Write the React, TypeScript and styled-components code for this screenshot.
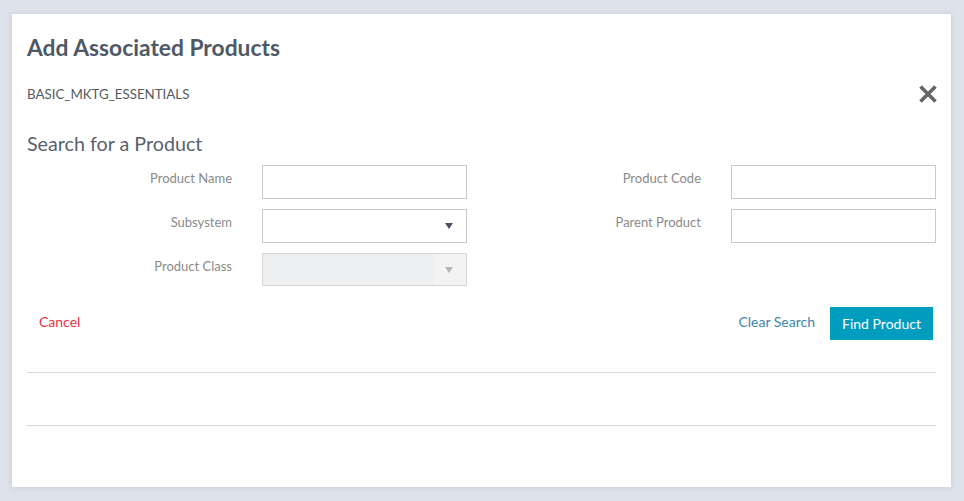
import React from 'react'
import styled, { createGlobalStyle } from 'styled-components'

const GlobalStyle = createGlobalStyle`
  html, body {
    margin: 0;
    padding: 0;
    background: #dee3eb;
    font-family: Lato, "Open Sans", sans-serif;
  }
  * {
    box-sizing: border-box;
  }
`

const Page = styled.div`
  padding: 14px 13px 14px 12px;
`

const Card = styled.div`
  width: 939px;
  height: 473px;
  background: #fff;
  padding: 20px 15px 0 15px;
  box-shadow: 0 0 6px rgba(120, 135, 160, 0.25);
`

const Title = styled.h1`
  margin: 0;
  font-size: 22.8px;
  line-height: 26px;
  font-weight: 700;
  color: #4f5966;
`

const SubRow = styled.div`
  display: flex;
  align-items: center;
  justify-content: space-between;
  height: 20px;
  margin-top: 24px;
`

const Code = styled.span`
  font-size: 13.3px;
  color: #555a60;
`

const CloseButton = styled.button`
  border: none;
  background: none;
  padding: 0;
  margin-right: -2px;
  width: 20px;
  height: 20px;
  cursor: pointer;
  display: flex;
`

const SectionTitle = styled.h2`
  margin: 28px 0 0;
  font-size: 19.7px;
  line-height: 24px;
  font-weight: 400;
  color: #58616c;
`

const Form = styled.div`
  display: grid;
  grid-template-columns: 205px 205px 204px 205px;
  grid-auto-rows: 34px;
  column-gap: 30px;
  row-gap: 10px;
  margin-top: 9px;
`

const Label = styled.label`
  text-align: right;
  font-size: 13px;
  line-height: 18px;
  padding-top: 4px;
  color: #8a8a8a;
`

const Input = styled.input`
  width: 100%;
  height: 100%;
  border: 1px solid #c9c9c9;
  background: #fff;
  font: inherit;
  padding: 0 8px;
  outline: none;
`

const SelectBox = styled.div<{ $disabled?: boolean }>`
  height: ${p => (p.$disabled ? '33px' : '100%')};
  border: 1px solid ${p => (p.$disabled ? '#d5d5d5' : '#c9c9c9')};
  background: ${p => (p.$disabled ? '#eeeff0' : '#fff')};
  display: flex;
  justify-content: flex-end;
`

const ArrowArea = styled.div<{ $disabled?: boolean }>`
  width: 32px;
  display: flex;
  align-items: center;
  justify-content: center;
  background: ${p => (p.$disabled ? '#f3f3f3' : 'transparent')};

  &::after {
    content: '';
    border-left: 4px solid transparent;
    border-right: 4px solid transparent;
    border-top: 6px solid ${p => (p.$disabled ? '#b5b5b5' : '#4b5360')};
    margin-left: -2px;
  }
`

const Actions = styled.div`
  display: flex;
  align-items: center;
  height: 33px;
  margin-top: 20px;
  padding-right: 3px;
`

const LinkButton = styled.button<{ $tone: 'danger' | 'info' }>`
  border: none;
  background: none;
  font: inherit;
  font-size: 14px;
  padding: 0 12px;
  margin-bottom: 4px;
  cursor: pointer;
  color: ${p => (p.$tone === 'danger' ? '#e8334b' : '#3c87a8')};
`

const Spacer = styled.div`
  flex: 1;
`

const PrimaryButton = styled.button`
  height: 33px;
  width: 103px;
  margin-left: 3px;
  padding-bottom: 2px;
  border: none;
  background: #019dbf;
  color: #fff;
  font: inherit;
  font-size: 14px;
  cursor: pointer;
`

const Divider = styled.hr<{ $gap: number }>`
  border: none;
  border-top: 1px solid #dcdcdc;
  margin: ${p => p.$gap}px 0 0;
`

function CloseIcon() {
  return (
    <svg width="20" height="20" viewBox="0 0 20 20">
      <path d="M2.5 2.5 L17.5 17.5 M17.5 2.5 L2.5 17.5" stroke="#626466" strokeWidth="3.6" strokeLinecap="butt" />
    </svg>
  )
}

function Select({ disabled }: { disabled?: boolean }) {
  return (
    <SelectBox $disabled={disabled}>
      <ArrowArea $disabled={disabled} />
    </SelectBox>
  )
}

export default function App() {
  return (
    <Page>
      <GlobalStyle />
      <Card>
        <Title>Add Associated Products</Title>
        <SubRow>
          <Code>BASIC_MKTG_ESSENTIALS</Code>
          <CloseButton aria-label="Close">
            <CloseIcon />
          </CloseButton>
        </SubRow>
        <SectionTitle>Search for a Product</SectionTitle>
        <Form>
          <Label>Product Name</Label>
          <Input />
          <Label>Product Code</Label>
          <Input />
          <Label>Subsystem</Label>
          <Select />
          <Label>Parent Product</Label>
          <Input />
          <Label>Product Class</Label>
          <Select disabled />
        </Form>
        <Actions>
          <LinkButton $tone="danger">Cancel</LinkButton>
          <Spacer />
          <LinkButton $tone="info">Clear Search</LinkButton>
          <PrimaryButton>Find Product</PrimaryButton>
        </Actions>
        <Divider $gap={32} />
        <Divider $gap={52} />
      </Card>
    </Page>
  )
}
